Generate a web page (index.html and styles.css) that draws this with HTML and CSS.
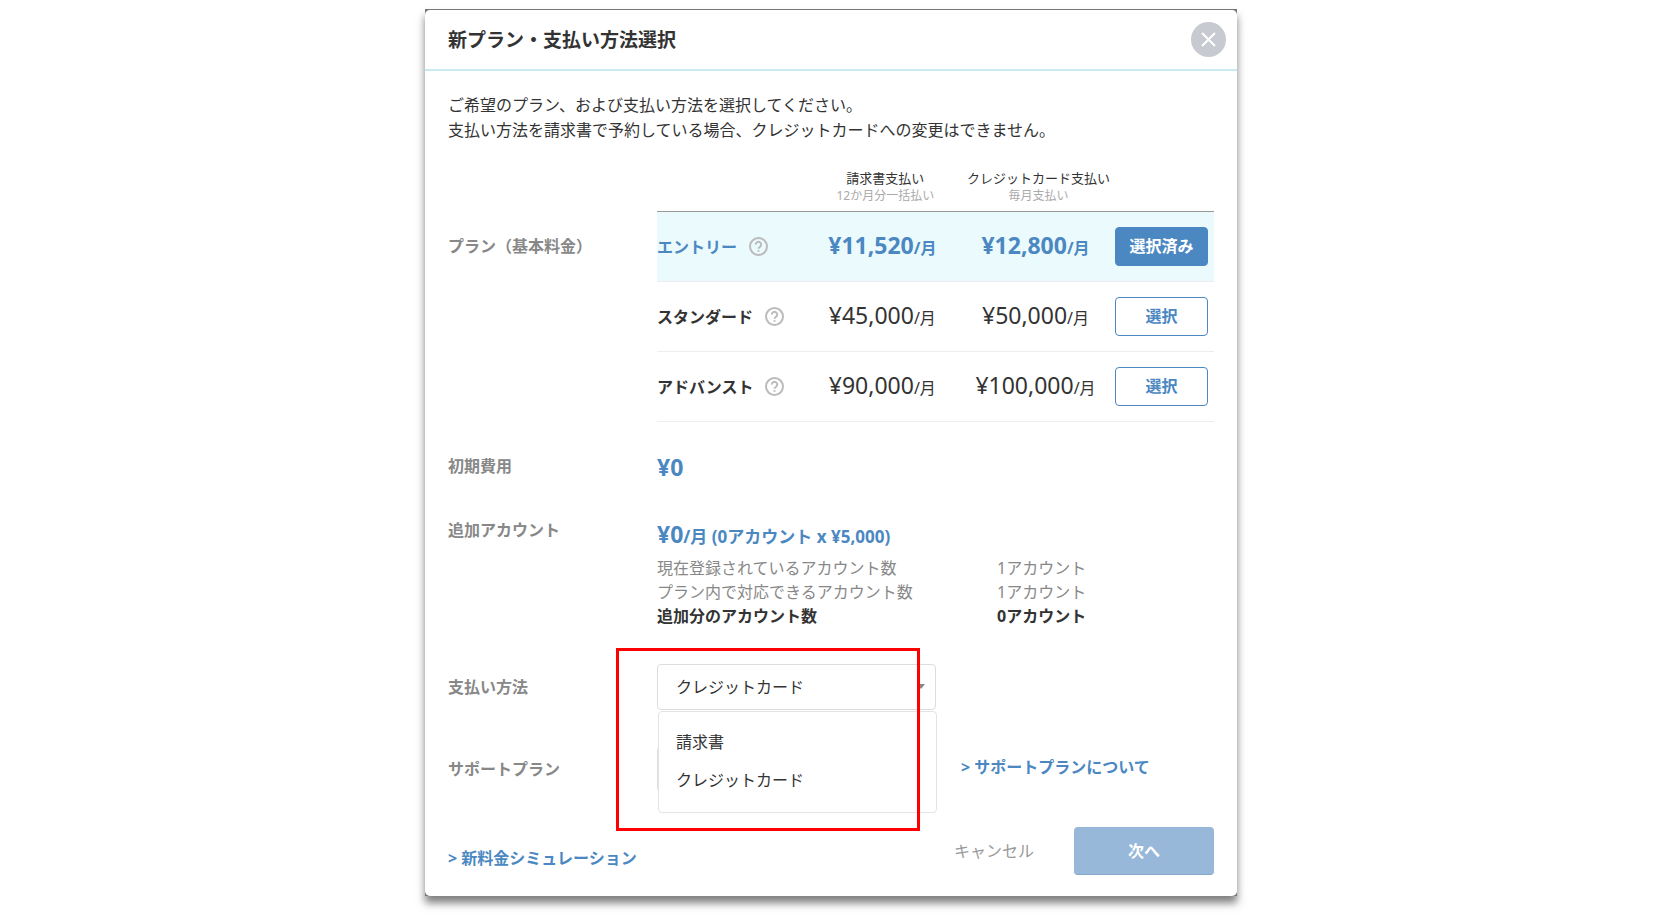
FILE: index.html
```html
<!DOCTYPE html>
<html lang="ja">
<head>
  <meta charset="UTF-8">
  <meta name="viewport" content="width=device-width, initial-scale=1">
  <title>新プラン・支払い方法選択</title>
  <link rel="stylesheet" href="styles.css">
</head>
<body>

<div class="modal-frame">
  <div class="modal" role="dialog" aria-labelledby="modal-title">
    <header class="modal-header">
      <h1 id="modal-title">新プラン・支払い方法選択</h1>
      <button type="button" class="btn-close" aria-label="閉じる">
        <svg width="15" height="15" viewBox="0 0 15 15"><path d="M1 1l13 13M14 1L1 14" fill="none" stroke="#fff" stroke-width="2"/></svg>
      </button>
    </header>

    <div class="modal-body">
      <p class="intro">ご希望のプラン、および支払い方法を選択してください。<br>支払い方法を請求書で予約している場合、クレジットカードへの変更はできません。</p>

      <section class="row row-plan">
        <h2 class="label">プラン（基本料金）</h2>
        <table class="plans">
          <colgroup><col class="col-name"><col class="col-invoice"><col class="col-card"><col></colgroup>
          <thead>
            <tr>
              <td></td>
              <th scope="col">請求書支払い<small>12か月分一括払い</small></th>
              <th scope="col">クレジットカード支払い<small>毎月支払い</small></th>
              <td></td>
            </tr>
          </thead>
          <tbody>
            <tr class="selected">
              <th scope="row"><span class="plan-name">エントリー
                <svg class="help" viewBox="0 0 19 19"><circle cx="9.500" cy="9.500" r="8.500"/><path d="M6.800 7.600a2.700 2.700 0 1 1 4.300 2.100c-1 .7-1.600 1.100-1.600 2.100"/><path d="M9.500 13.200v1.600"/></svg></span></th>
              <td><span class="price">¥11,520</span>/月</td>
              <td><span class="price">¥12,800</span>/月</td>
              <td><button type="button" class="btn-plan">選択済み</button></td>
            </tr>
            <tr>
              <th scope="row"><span class="plan-name">スタンダード
                <svg class="help" viewBox="0 0 19 19"><circle cx="9.500" cy="9.500" r="8.500"/><path d="M6.800 7.600a2.700 2.700 0 1 1 4.300 2.100c-1 .7-1.600 1.100-1.600 2.100"/><path d="M9.500 13.200v1.600"/></svg></span></th>
              <td><span class="price">¥45,000</span>/月</td>
              <td><span class="price">¥50,000</span>/月</td>
              <td><button type="button" class="btn-plan">選択</button></td>
            </tr>
            <tr>
              <th scope="row"><span class="plan-name">アドバンスト
                <svg class="help" viewBox="0 0 19 19"><circle cx="9.500" cy="9.500" r="8.500"/><path d="M6.800 7.600a2.700 2.700 0 1 1 4.300 2.100c-1 .7-1.600 1.100-1.600 2.100"/><path d="M9.500 13.200v1.600"/></svg></span></th>
              <td><span class="price">¥90,000</span>/月</td>
              <td><span class="price">¥100,000</span>/月</td>
              <td><button type="button" class="btn-plan">選択</button></td>
            </tr>
          </tbody>
        </table>
      </section>

      <section class="row">
        <h2 class="label">初期費用</h2>
        <p class="amount"><span class="price">¥0</span></p>
      </section>

      <section class="row">
        <h2 class="label">追加アカウント</h2>
        <div class="accounts">
          <p class="amount"><span class="price">¥0</span>/月 (0アカウント x ¥5,000)</p>
          <dl class="counts">
            <dt>現在登録されているアカウント数</dt><dd>1アカウント</dd>
            <dt>プラン内で対応できるアカウント数</dt><dd>1アカウント</dd>
            <dt class="total">追加分のアカウント数</dt><dd class="total">0アカウント</dd>
          </dl>
        </div>
      </section>

      <section class="row row-field">
        <label class="label" for="payment">支払い方法</label>
        <div class="field">
          <select id="payment">
            <option>請求書</option>
            <option selected>クレジットカード</option>
          </select>
          <svg class="arrow" width="8" height="5" viewBox="0 0 8 5"><path d="M0 0h8L4 5z" fill="#888"/></svg>
          <ul class="menu" role="listbox" aria-label="支払い方法">
            <li role="option">請求書</li>
            <li role="option" aria-selected="true">クレジットカード</li>
          </ul>
          <div class="highlight"></div>
        </div>
      </section>

      <section class="row row-field">
        <label class="label" for="support">サポートプラン</label>
        <div class="support">
          <div class="field">
            <select id="support"><option></option></select>
          </div>
          <a href="#">&gt; サポートプランについて</a>
        </div>
      </section>

      <footer class="modal-footer">
        <a href="#">&gt; 新料金シミュレーション</a>
        <div class="actions">
          <button type="button" class="btn-cancel">キャンセル</button>
          <button type="button" class="btn-next">次へ</button>
        </div>
      </footer>
    </div>
  </div>
</div>

</body>
</html>
```
FILE: styles.css
```css
* { box-sizing: border-box; }
body {
  margin: 0;
  padding: 9px 0 24px;
  background: #fff;
  color: #333;
  font: 16px/24px "Noto Sans", "Noto Sans CJK JP", sans-serif;
}
h1, h2, p, dl, dd, ul { margin: 0; padding: 0; }
button, select { font: inherit; color: inherit; cursor: pointer; }
a { color: #4b88c2; font-weight: bold; text-decoration: none; }
a:hover { text-decoration: underline; }

.modal-frame {
  max-width: 812px;
  margin: 0 auto;
  padding-top: 1px;
  background: #777;
  box-shadow: 0 7px 8px rgba(0,0,0,0.5);
}
.modal { background: #fff; border-radius: 5px; }
.modal-header {
  display: flex;
  align-items: center;
  justify-content: space-between;
  height: 61px;
  padding: 0 11px 0 23px;
  border-bottom: 2px solid #c8eaf2;
}
.modal-header h1 { font-size: 19px; line-height: 28px; }
.btn-close {
  display: flex;
  align-items: center;
  justify-content: center;
  width: 35px;
  height: 35px;
  padding: 0;
  border: none;
  border-radius: 50%;
  background: #c7cad0;
}
.modal-body { padding: 22px 23px 21px; }
.intro { line-height: 25px; }

.row {
  display: grid;
  grid-template-columns: 209px 1fr;
  margin-top: 32px;
}
.label { font-size: 16px; line-height: 24px; font-weight: bold; color: #888; }
.row-plan { margin-top: 26px; }
.row-plan .label { padding-top: 65px; }
.row-field { margin-top: 36px; align-items: center; }

.plans { width: 100%; border-collapse: collapse; table-layout: fixed; }
.col-name { width: 27%; }
.col-invoice { width: 28%; }
.col-card { width: 27%; }
.plans th, .plans td { padding: 0; text-align: center; }
.plans thead th {
  padding-bottom: 6px;
  font-size: 13px;
  line-height: 18px;
  font-weight: normal;
  white-space: nowrap;
}
.plans small { display: block; font-size: 12px; color: #aaa; }
.plans tbody tr { height: 70px; border-bottom: 1px solid #eee; }
.plans tbody tr:first-child { border-top: 1px solid #999; }
.plans tbody td { padding-right: 6px; }
.plans tbody td:last-child { text-align: right; }
.plan-name { display: flex; align-items: center; gap: 12px; white-space: nowrap; }
.price { font-size: 23px; line-height: 1; }
.help { width: 19px; height: 19px; fill: none; stroke: #bbb; stroke-width: 2; }
.selected { background: #ebfafc; color: #4b88c2; font-weight: bold; }
.btn-plan {
  width: 93px;
  height: 39px;
  padding: 0 0 2px;
  border: 1px solid #4b88c2;
  border-radius: 4px;
  background: #fff;
  color: #4b88c2;
  font-weight: bold;
}
.selected .btn-plan { background: #4b88c2; color: #fff; }

.amount { color: #4b88c2; font-size: 17px; line-height: 32px; font-weight: bold; }
.accounts { padding-top: 3px; }
.counts {
  display: grid;
  grid-template-columns: 340px 1fr;
  margin-top: 3px;
  color: #888;
}
.counts .total { color: #333; font-weight: bold; }

.field { position: relative; width: 279px; }
.field select {
  display: block;
  width: 100%;
  height: 46px;
  padding: 0 18px;
  border: 1px solid #ddd;
  border-radius: 4px;
  background: #fff;
  appearance: none;
}
.arrow { position: absolute; top: 20px; right: 11px; }
.menu {
  position: absolute;
  z-index: 1;
  top: 47px;
  left: 1px;
  width: 100%;
  padding: 11px 0 13px;
  border: 1px solid #e4e4e4;
  border-radius: 4px;
  background: #fff;
  list-style: none;
}
.menu li { padding: 7px 17px; cursor: pointer; }
/* red frame around the payment menu */
.highlight {
  position: absolute;
  z-index: 2;
  top: -16px;
  left: -41px;
  width: 304px;
  height: 183px;
  border: 3px solid #f00;
  pointer-events: none;
}
.support { display: flex; align-items: center; gap: 25px; }
.support a { padding-bottom: 5px; }

.modal-footer {
  display: flex;
  align-items: flex-end;
  justify-content: space-between;
  margin-top: 35px;
}
.modal-footer > a { padding-bottom: 5px; }
.actions { display: flex; gap: 40px; }
.btn-cancel { padding: 0; border: none; background: none; color: #999; }
.btn-next {
  width: 140px;
  height: 48px;
  border: none;
  border-bottom: 1px solid #88a9cc;
  border-radius: 4px;
  background: #98b8da;
  color: #fff;
  font-weight: bold;
}
```
